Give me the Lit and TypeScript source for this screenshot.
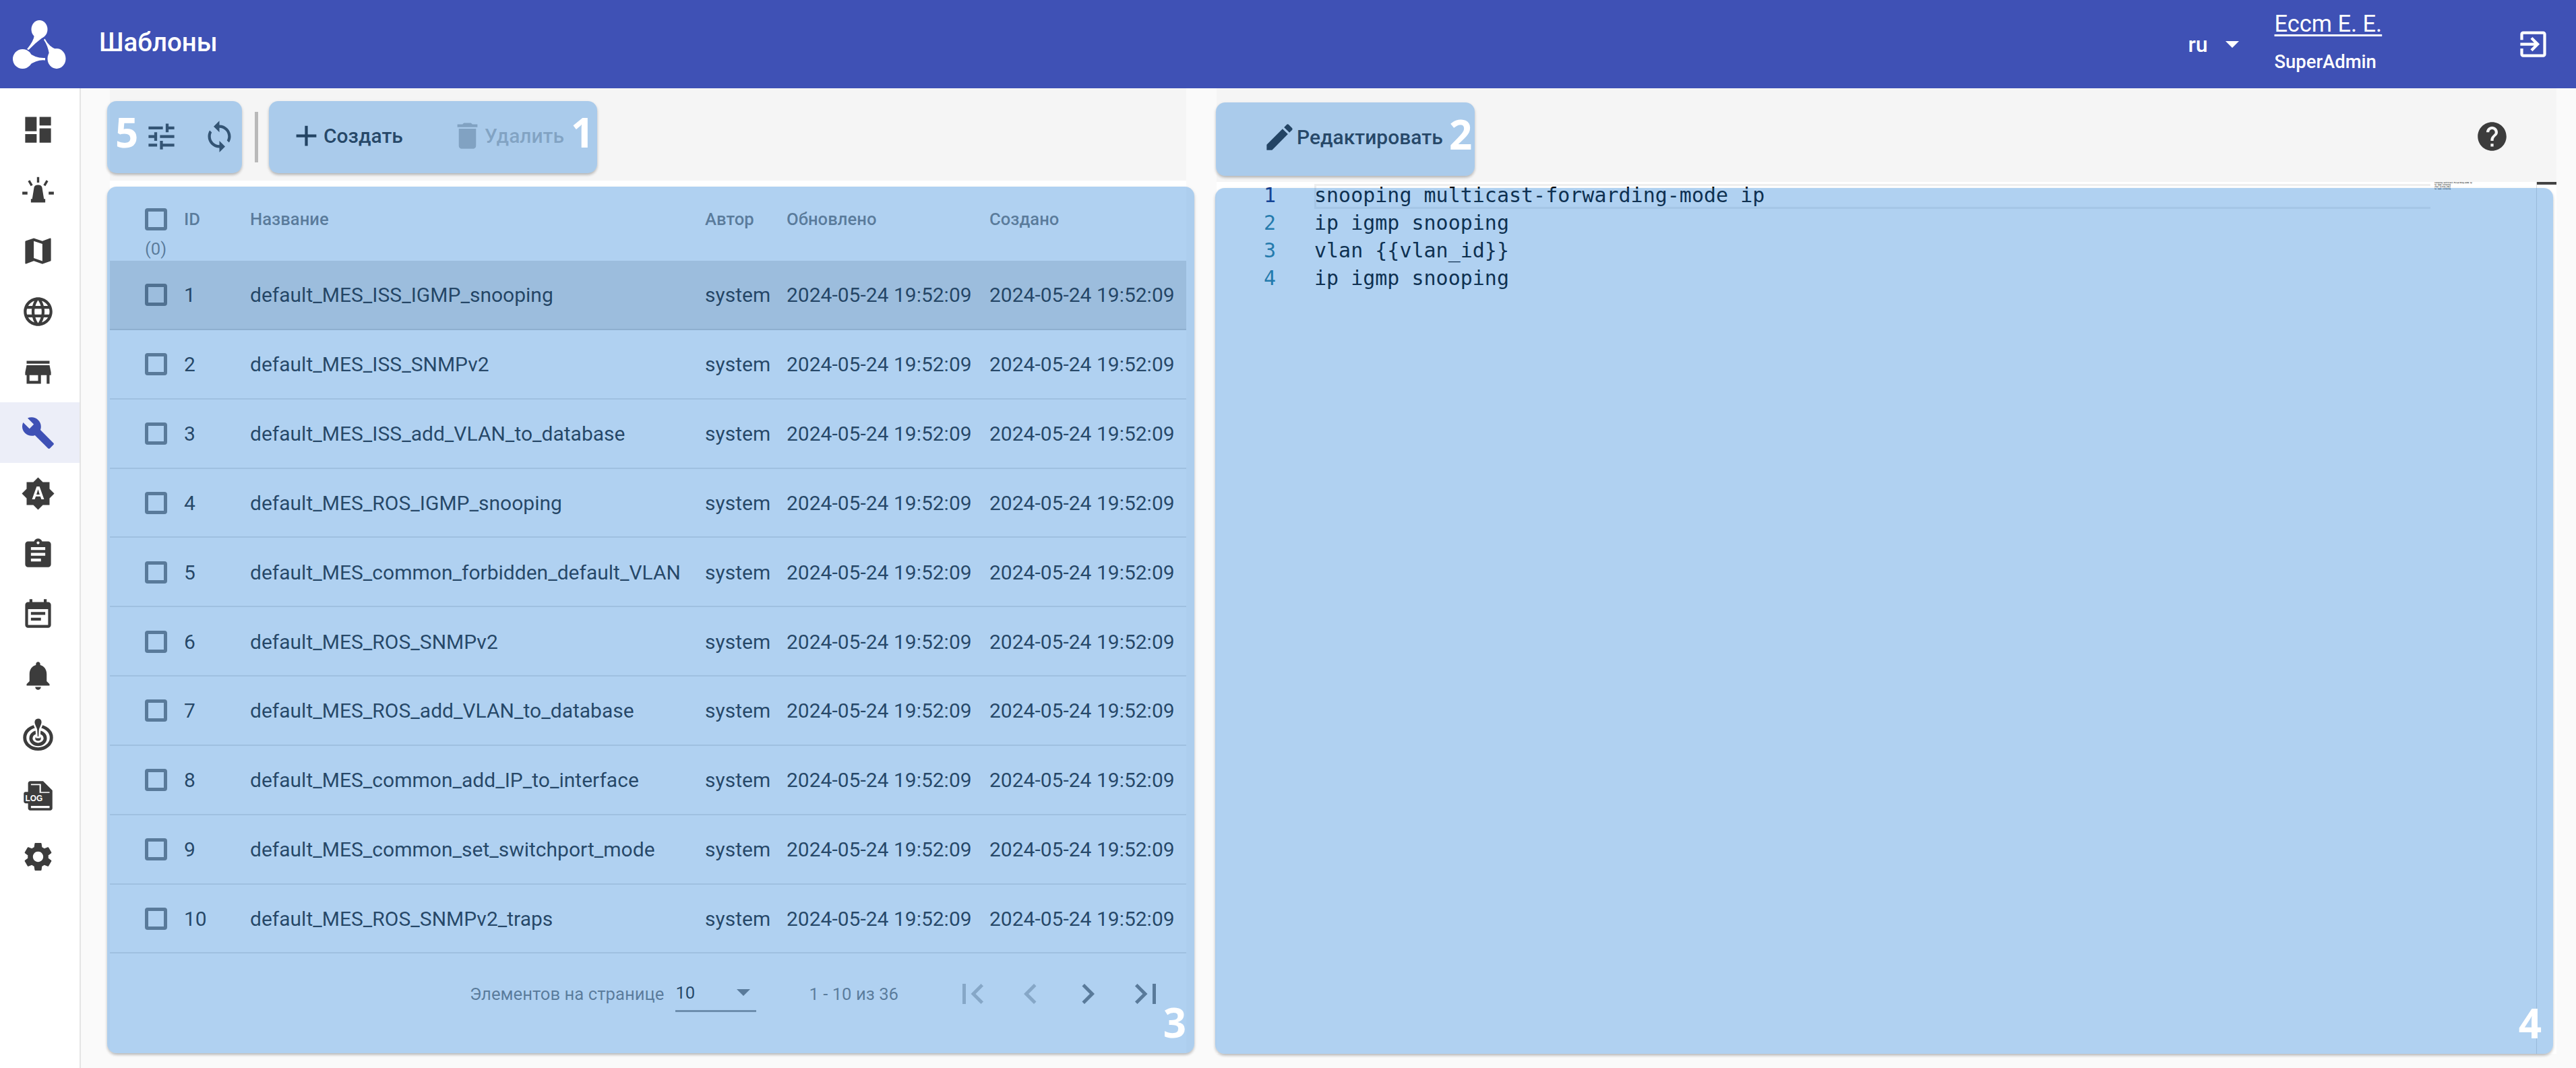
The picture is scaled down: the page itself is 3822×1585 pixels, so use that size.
import { LitElement, html, css } from "lit";
import { customElement } from "lit/decorators.js";

const P: Record<string, string> = {
  dashboard: "M3 13h8V3H3v10zm0 8h8v-6H3v6zm10 0h8V11h-8v10zm0-18v6h8V3h-8z",
  map: "M20.5 3l-.16.03L15 5.1 9 3 3.36 4.9c-.21.07-.36.25-.36.48V20.5c0 .28.22.5.5.5l.16-.03L9 18.9l6 2.1 5.64-1.9c.21-.07.36-.25.36-.48V3.5c0-.28-.22-.5-.5-.5zM15 19l-6-2.11V5l6 2.11V19z",
  language: "M11.99 2C6.47 2 2 6.48 2 12s4.47 10 9.99 10C17.52 22 22 17.52 22 12S17.52 2 11.99 2zm6.93 6h-2.95c-.32-1.25-.78-2.45-1.38-3.56 1.84.63 3.37 1.91 4.33 3.56zM12 4.04c.83 1.2 1.48 2.53 1.91 3.96h-3.82c.43-1.43 1.08-2.76 1.91-3.96zM4.26 14C4.1 13.36 4 12.69 4 12s.1-1.36.26-2h3.38c-.08.66-.14 1.32-.14 2 0 .68.06 1.34.14 2H4.26zm.82 2h2.95c.32 1.25.78 2.45 1.38 3.56-1.84-.63-3.37-1.9-4.33-3.56zm2.95-8H5.08c.96-1.66 2.49-2.93 4.33-3.56C8.81 5.55 8.35 6.75 8.03 8zM12 19.96c-.83-1.2-1.48-2.53-1.91-3.96h3.82c-.43 1.43-1.08 2.76-1.91 3.96zM14.34 14H9.66c-.09-.66-.16-1.32-.16-2 0-.68.07-1.35.16-2h4.68c.09.65.16 1.32.16 2 0 .68-.07 1.34-.16 2zm.25 5.56c.6-1.11 1.06-2.31 1.38-3.56h2.95c-.96 1.65-2.49 2.93-4.33 3.56zM16.36 14c.08-.66.14-1.32.14-2 0-.68-.06-1.34-.14-2h3.38c.16.64.26 1.31.26 2s-.1 1.36-.26 2h-3.38z",
  store: "M20 4H4v2h16V4zm1 10v-2l-1-5H4l-1 5v2h1v6h10v-6h4v6h2v-6h1zm-9 4H6v-4h6v4z",
  build: "M22.7 19l-9.1-9.1c.9-2.3.4-5-1.5-6.9-2-2-5-2.4-7.4-1.3L9 6 6 9 1.6 4.7C.4 7.1.9 10.1 2.9 12.1c1.9 1.9 4.6 2.4 6.9 1.5l9.1 9.1c.4.4 1 .4 1.4 0l2.3-2.3c.5-.4.5-1.1.1-1.4z",
  auto: "M10.85 12.65h2.3L12 9l-1.15 3.65zM20 8.69V4h-4.69L12 .69 8.69 4H4v4.69L.69 12 4 15.31V20h4.69L12 23.31 15.31 20H20v-4.69L23.31 12 20 8.69zM14.3 16l-.7-2h-3.2l-.7 2H7.8L11 7h2l3.2 9h-1.9z",
  assignment: "M19 3h-4.18C14.4 1.84 13.3 1 12 1c-1.3 0-2.4.84-2.82 2H5c-1.1 0-2 .9-2 2v14c0 1.1.9 2 2 2h14c1.1 0 2-.9 2-2V5c0-1.1-.9-2-2-2zm-7 0c.55 0 1 .45 1 1s-.45 1-1 1-1-.45-1-1 .45-1 1-1zm2 14H7v-2h7v2zm3-4H7v-2h10v2zm0-4H7V7h10v2z",
  event: "M17 10H7v2h10v-2zm2-7h-1V1h-2v2H8V1H6v2H5c-1.11 0-1.99.9-1.99 2L3 19c0 1.1.89 2 2 2h14c1.1 0 2-.9 2-2V5c0-1.1-.9-2-2-2zm0 16H5V8h14v11zm-5-5H7v2h7v-2z",
  bell: "M12 22c1.1 0 2-.9 2-2h-4c0 1.1.89 2 2 2zm6-6v-5c0-3.07-1.64-5.64-4.5-6.32V4c0-.83-.67-1.5-1.5-1.5s-1.5.67-1.5 1.5v.68C7.63 5.36 6 7.92 6 11v5l-2 2v1h16v-1l-2-2z",
  settings: "M19.14 12.94c.04-.3.06-.61.06-.94 0-.32-.02-.64-.07-.94l2.03-1.58c.18-.14.23-.41.12-.61l-1.92-3.32c-.12-.22-.37-.29-.59-.22l-2.39.96c-.5-.38-1.03-.7-1.62-.94l-.36-2.54c-.04-.24-.24-.41-.48-.41h-3.84c-.24 0-.43.17-.47.41l-.36 2.54c-.59.24-1.13.57-1.62.94l-2.39-.96c-.22-.08-.47 0-.59.22L2.74 8.87c-.12.21-.08.47.12.61l2.03 1.58c-.05.3-.09.63-.09.94s.02.64.07.94l-2.03 1.58c-.18.14-.23.41-.12.61l1.92 3.32c.12.22.37.29.59.22l2.39-.96c.5.38 1.03.7 1.62.94l.36 2.54c.05.24.24.41.48.41h3.84c.24 0 .44-.17.47-.41l.36-2.54c.59-.24 1.13-.56 1.62-.94l2.39.96c.22.08.47 0 .59-.22l1.92-3.32c.12-.22.07-.47-.12-.61l-2.01-1.58zM12 15.6c-1.98 0-3.6-1.62-3.6-3.6s1.62-3.6 3.6-3.6 3.6 1.62 3.6 3.6-1.62 3.6-3.6 3.6z",
  tune: "M3 17v2h6v-2H3zM3 5v2h10V5H3zm10 16v-2h8v-2h-8v-2h-2v6h2zM7 9v2H3v2h4v2h2V9H7zm14 4v-2H11v2h10zm-6-4h2V7h4V5h-4V3h-2v6z",
  sync: "M12 4V1L8 5l4 4V6c3.31 0 6 2.69 6 6 0 1.01-.25 1.97-.7 2.8l1.46 1.46C19.54 15.03 20 13.57 20 12c0-4.42-3.58-8-8-8zm0 14c-3.31 0-6-2.69-6-6 0-1.01.25-1.97.7-2.8L5.24 7.74C4.46 8.97 4 10.43 4 12c0 4.42 3.58 8 8 8v3l4-4-4-4v3z",
  add: "M19 13h-6v6h-2v-6H5v-2h6V5h2v6h6v2z",
  del: "M6 19c0 1.1.9 2 2 2h8c1.1 0 2-.9 2-2V7H6v12zM19 4h-3.5l-1-1h-5l-1 1H5v2h14V4z",
  edit: "M3 17.25V21h3.75L17.81 9.94l-3.75-3.75L3 17.25zM20.71 7.04c.39-.39.39-1.02 0-1.41l-2.34-2.34c-.39-.39-1.02-.39-1.41 0l-1.83 1.83 3.75 3.75 1.83-1.83z",
  help: "M12 2C6.48 2 2 6.48 2 12s4.48 10 10 10 10-4.48 10-10S17.52 2 12 2zm1 17h-2v-2h2v2zm2.07-7.75l-.9.92C13.45 12.9 13 13.5 13 15h-2v-.5c0-1.1.45-2.1 1.17-2.83l1.24-1.26c.37-.36.59-.86.59-1.41 0-1.1-.9-2-2-2s-2 .9-2 2H8c0-2.21 1.79-4 4-4s4 1.79 4 4c0 .88-.36 1.68-.93 2.25z",
  exit: "M10.09 15.59L11.5 17l5-5-5-5-1.41 1.41L12.67 11H3v2h9.67l-2.58 2.59zM19 3H5c-1.11 0-2 .9-2 2v4h2V5h14v14H5v-4H3v4c0 1.1.89 2 2 2h14c1.1 0 2-.9 2-2V5c0-1.1-.9-2-2-2z",
  first: "M18.41 16.59L13.82 12l4.59-4.59L17 6l-6 6 6 6zM6 6h2v12H6z",
  last: "M5.59 7.41L10.18 12l-4.59 4.59L7 18l6-6-6-6zM16 6h2v12h-2z",
  prev: "M15.41 7.41L14 6l-6 6 6 6 1.41-1.41L10.83 12z",
  next: "M10 6L8.59 7.41 13.17 12l-4.58 4.59L10 18l6-6z",
};

const ic = (n: string) => html`<svg class="ic" viewBox="0 0 24 24"><path fill="currentColor" d=${P[n]}></path></svg>`;

const siren = html`<svg class="ic" viewBox="0 0 24 24"><path fill="currentColor" d="M11.2 2.7h1.6v3.9h-1.6zM4.9 5.6l1.4-.8 2 3.4-1.4.8zM19.1 5.6l-1.4-.8-2 3.4 1.4.8zM1 12.9h3.6v2H1zM19.4 12.9H23v2h-3.6zM9.2 10c.3-1.2 1-1.8 2.8-1.8s2.500.6 2.800 1.800l1.300 8H17v2.500H7V18h.9z"></path></svg>`;
const target = html`<svg class="ic" viewBox="0 0 24 24"><g fill="none" stroke="currentColor" stroke-width="2.3"><ellipse cx="12" cy="13" rx="9.3" ry="8"></ellipse><ellipse cx="12" cy="13.5" rx="5" ry="4.3"></ellipse></g><ellipse cx="12" cy="13.7" rx="2" ry="1.6" fill="currentColor"></ellipse><path fill="currentColor" stroke="#fff" stroke-width="1.2" d="M12 -.8c1.900 0 3 1.400 3 3.200 0 2-1.400 3.200-1.800 5.200l-.3 5.200h-1.800l-.3-5.200C10.400 5.600 9 4.400 9 2.400 9 .6 10.100-.8 12-.8z"></path></svg>`;
const log = html`<svg class="ic" viewBox="0 0 24 24"><path fill="currentColor" d="M6.5 1.5h9L22 8v12.500c0 .8-.7 1.500-1.500 1.500h-14C5.700 22 5 21.300 5 20.500V17H3.200C2.500 17 2 16.500 2 15.800v-5.600C2 9.500 2.500 9 3.200 9H5V3c0-.8.7-1.500 1.500-1.500z"></path><path fill="#fff" d="M7 3.5h7v5.500h6v.8h-7V4.300H7zM7 18.800h13v1.600H7z"></path><text class="logt" x="3" y="15.3">LOG</text></svg>`;

const NAV: any[] = [ic("dashboard"), siren, ic("map"), ic("language"), ic("store"), ic("build"), ic("auto"), ic("assignment"), ic("event"), ic("bell"), target, log, ic("settings")];

const NAMES = [
  "default_MES_ISS_IGMP_snooping",
  "default_MES_ISS_SNMPv2",
  "default_MES_ISS_add_VLAN_to_database",
  "default_MES_ROS_IGMP_snooping",
  "default_MES_common_forbidden_default_VLAN",
  "default_MES_ROS_SNMPv2",
  "default_MES_ROS_add_VLAN_to_database",
  "default_MES_common_add_IP_to_interface",
  "default_MES_common_set_switchport_mode",
  "default_MES_ROS_SNMPv2_traps",
];
const CODE = ["snooping multicast-forwarding-mode ip", "ip igmp snooping", "vlan {{vlan_id}}", "ip igmp snooping"];

@customElement("app-root")
export class AppRoot extends LitElement {
  static styles = css`
    :host { display: flex; flex-direction: column; width: 100%; height: 100vh; background: #fafafa; font-family: Roboto, sans-serif; color: rgba(0,0,0,.87); overflow: hidden; }
    .ic { width: 51px; height: 51px; flex: none; display: block; overflow: visible; }
    .logt { font: 700 5.6px "Liberation Sans", sans-serif; fill: #fff; }

    header { height: 131px; flex: none; background: #3f51b5; color: #fff; display: flex; align-items: center; }
    .logo { width: 80px; height: 72px; margin-left: 19px; margin-top: 1px; flex: none; }
    .title { margin-left: 48px; font-size: 38.5px; font-weight: 500; margin-top: -6px; }
    .lang { margin-left: auto; display: flex; align-items: center; font-size: 32px; font-weight: 500; }
    .caret { width: 0; height: 0; border: 10px solid transparent; border-top-color: #fff; border-bottom: 0; margin-left: 26px; }
    .user { margin-left: 53px; width: 358px; display: flex; flex-direction: column; gap: 21px; margin-top: -9px; }
    .uname { font-size: 34.4px; text-decoration: underline; text-underline-offset: 4px; line-height: 40px; font-weight: 400; }
    .urole { font-size: 27.4px; line-height: 32px; font-weight: 500; }
    .logout { margin-right: 38.5px; }

    .body { flex: 1; display: flex; min-height: 0; }
    nav { width: 118px; border-right: 2px solid #e4e4e4; background: #fff; flex: none; padding-top: 16.5px; box-sizing: content-box; }
    .nav-item { height: 89.96px; display: flex; align-items: center; justify-content: center; color: #3c3c3c; padding-right: 6px; box-sizing: border-box; }
    .nav-item.on { background: #eceef8; color: #3f51b5; }
    main { flex: 1; display: grid; grid-template-columns: 1597px 1988px; column-gap: 45px; padding-left: 43px; min-width: 0; }
    .pane { display: flex; flex-direction: column; min-width: 0; }

    .toolbar { background: #f5f5f5; display: flex; align-items: flex-start; flex: none; }
    .toolbar.l { height: 137px; padding-top: 19px; box-sizing: border-box; }
    .toolbar.r { height: 139px; padding-top: 21px; box-sizing: border-box; }

    .ann { position: relative; }
    .ann::after { content: ""; position: absolute; inset: var(--t, 0) var(--r, 0) var(--b, 0) var(--l, 0); background: rgba(40,130,216,.37); border-radius: 14px; box-shadow: 0 3px 4px -1px rgba(0,0,0,.2), 0 2px 5px rgba(0,0,0,.12); pointer-events: none; }
    .num { position: absolute; z-index: 2; color: #fff; font: 700 60px/60px "Open Sans", sans-serif; }

    .group { display: flex; align-items: center; height: 107px; box-sizing: border-box; padding-bottom: 3px; flex: none; font-weight: 500; font-size: 30px; }
    .g1 { width: 200px; margin-left: -4px; padding-left: 55px; gap: 35px; color: #3a3a3a; }
    .sep { width: 5px; height: 75px; background: #b9b9b9; margin: 16px 16px 0 19px; flex: none; }
    .g2 { width: 487px; padding-left: 30px; padding-bottom: 5px; }
    .btn { display: flex; align-items: center; }
    .btn.dis { color: rgba(0,0,0,.26); margin-left: 70px; }
    .g3 { width: 384px; height: 109px; margin-left: -1px; padding-left: 69px; padding-bottom: 7px; }
    .help { margin-left: auto; margin-right: 70px; margin-top: 25px; color: #3c3c3c; }

    .table { --t: 9px; --l: -4px; --r: -12px; background: #fff; height: 1295px; flex: none; }
    .row { display: grid; grid-template-columns: 52px 58px 98px 675px 121px 301px 1fr; align-items: center; font-size: 30px; }
    .thead { height: 119px; font-size: 25.7px; font-weight: 500; color: rgba(0,0,0,.54); align-items: start; padding-top: 41px; box-sizing: border-box; }
    .tbody .row { height: 102.85px; border-bottom: 2px solid rgba(0,0,0,.1); box-sizing: border-box; padding-top: 1px; }
    .tbody .row.sel { background: #e0e0e0; }
    .cb { width: 33px; height: 33px; border: 5px solid rgba(0,0,0,.54); border-radius: 4px; box-sizing: border-box; grid-column: 2; }
    .cnt { grid-column: 2; grid-row: 2; font-weight: 400; margin-top: 9px; }
    .thead .c { line-height: 33px; }

    .pager { display: flex; align-items: center; height: 120px; font-size: 25.7px; color: rgba(0,0,0,.54); padding-left: 534px; }
    .select { width: 120px; margin-left: 17px; height: 56px; border-bottom: 3px solid rgba(0,0,0,.42); display: flex; align-items: center; justify-content: space-between; color: rgba(0,0,0,.87); padding-right: 9px; box-sizing: border-box; align-self: flex-start; margin-top: 31px; }
    .select i { width: 0; height: 0; border: 10.5px solid transparent; border-top-color: rgba(0,0,0,.54); border-bottom: 0; }
    .range { margin-left: 78px; width: 200px; }
    .pbtn { width: 85.5px; display: flex; justify-content: center; color: rgba(0,0,0,.54); }
    .pbtn .ic { width: 60px; height: 60px; }
    .pbtn.dis { color: rgba(0,0,0,.26); }

    .editor { --t: 9px; --l: -2px; --r: 5px; background: #fff; height: 1294px; flex: none; display: grid; grid-template-columns: 145px 1656px 157px 30px; font: 30px/41px "DejaVu Sans Mono", monospace; }
    .gutter { color: #237893; margin-top: -1px; text-align: right; padding-right: 57px; box-sizing: border-box; }
    .gutter .act { color: #0b216f; }
    .gutter div, .code div { height: 41px; }
    .code { margin-top: -1px; color: #000; white-space: pre; position: relative; }
    .code .curline { position: absolute; left: 0; right: 0; top: 4px; height: 37px; border: solid #eee; border-width: 3px 0 3px 3px; box-sizing: border-box; }
    .mini { font-size: 2.5px; line-height: 3px; font-weight: 700; color: #000; white-space: pre; padding-left: 6px; }
    .ruler { border-left: 1px solid #ddd; }
    .ruler i { display: block; height: 4px; background: #444; }
  `;

  render() {
    return html`
      <header>
        <svg class="logo" viewBox="0 0 80 72"><g fill="#fff">
          <ellipse cx="39.5" cy="13.5" rx="12" ry="13.5"></ellipse>
          <ellipse cx="14.5" cy="57.5" rx="14.5" ry="14.5"></ellipse>
          <ellipse cx="65" cy="57" rx="13.5" ry="15"></ellipse>
          <path d="M32 22 Q31 31 21 43 L23.5 44 Q33 34 45 25Z"></path>
          <path d="M47.5 27.5 L46 29 Q52 38 54 50 L66 44 Q54 40 47.5 27.5Z"></path>
          <path d="M48 56 V59.5 Q36 58 24 67 L22 47 Q34 57 48 56Z"></path>
        </g></svg>
        <div class="title">Шаблоны</div>
        <div class="lang">ru<span class="caret"></span></div>
        <div class="user"><div class="uname">Eccm E. E.</div><div class="urole">SuperAdmin</div></div>
        <div class="logout">${ic("exit")}</div>
      </header>
      <div class="body">
        <nav>${NAV.map((n, i) => html`<div class="nav-item ${i === 5 ? "on" : ""}">${n}</div>`)}</nav>
        <main>
          <section class="pane">
            <div class="toolbar l">
              <div class="group g1 ann"><span class="num" style="left:12px;top:16px">5</span>${ic("tune")}${ic("sync")}</div>
              <div class="sep"></div>
              <div class="group g2 ann">
                <div class="btn">${ic("add")}Создать</div>
                <div class="btn dis">${ic("del")}Удалить</div>
                <span class="num" style="left:448px;top:16px">1</span>
              </div>
            </div>
            <div class="table ann">
              <div class="row thead">
                <div class="cb"></div><div class="c">ID</div><div class="c">Название</div><div class="c">Автор</div><div class="c">Обновлено</div><div class="c">Создано</div>
                <div class="cnt">(0)</div>
              </div>
              <div class="tbody">
                ${NAMES.map((n, i) => html`<div class="row ${i === 0 ? "sel" : ""}">
                  <div class="cb"></div><div>${i + 1}</div><div>${n}</div><div>system</div><div>2024-05-24 19:52:09</div><div>2024-05-24 19:52:09</div>
                </div>`)}
              </div>
              <div class="pager">
                <span>Элементов на странице</span>
                <div class="select">10<i></i></div>
                <span class="range">1 - 10 из 36</span>
                <div class="pbtn dis">${ic("first")}</div>
                <div class="pbtn dis">${ic("prev")}</div>
                <div class="pbtn">${ic("next")}</div>
                <div class="pbtn">${ic("last")}</div>
              </div>
              <span class="num" style="right:0;bottom:16px">3</span>
            </div>
          </section>
          <section class="pane">
            <div class="toolbar r">
              <div class="group g3 ann">
                <div class="btn">${ic("edit")}Редактировать</div>
                <span class="num" style="left:346px;top:17px">2</span>
              </div>
              <div class="help">${ic("help")}</div>
            </div>
            <div class="editor ann">
              <div class="gutter">${CODE.map((_, i) => html`<div class="${i === 0 ? "act" : ""}">${i + 1}</div>`)}</div>
              <div class="code"><div class="curline"></div>${CODE.map((l) => html`<div>${l}</div>`)}</div>
              <div class="mini">${CODE.map((l) => html`<div>${l}</div>`)}</div>
              <div class="ruler"><i></i></div>
              <span class="num" style="right:22px;bottom:16px">4</span>
            </div>
          </section>
        </main>
      </div>
    `;
  }
}
